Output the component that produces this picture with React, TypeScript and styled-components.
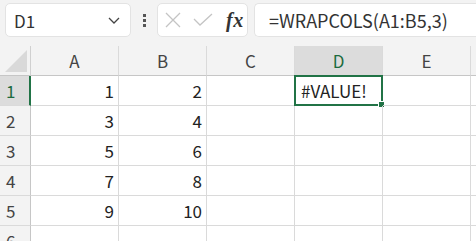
import React from "react";
import styled, { createGlobalStyle } from "styled-components";

const Global = createGlobalStyle`
  html, body { margin: 0; padding: 0; background: #ffffff; overflow: hidden; }
  body { width: 476px; height: 241px; font-family: "Noto Sans CJK JP", "Noto Sans", sans-serif; }
`;

const Page = styled.div`
  width: 476px;
  height: 241px;
  overflow: hidden;
  display: flex;
  flex-direction: column;
`;

const Toolbar = styled.div`
  height: 46px;
  flex: none;
  background: #f3f3f3;
  display: flex;
  align-items: flex-start;
  padding: 3px 0 0 5px;
  box-sizing: border-box;
`;

const Box = styled.div<{ $w: number }>`
  width: ${(p) => p.$w}px;
  flex: none;
  height: 34px;
  box-sizing: border-box;
  background: #ffffff;
  border: 1px solid #e3e3e3;
  border-radius: 5px;
  display: flex;
  align-items: center;
`;

const NameText = styled.span`
  flex: 1;
  padding-left: 8px;
  font-size: 17px;
  color: #333;
`;

const Chevron = styled.svg`
  width: 14px;
  height: 14px;
  margin-right: 9px;
`;

const Dots = styled.div`
  width: 26px;
  flex: none;
  height: 34px;
  display: flex;
  flex-direction: column;
  align-items: center;
  justify-content: center;
  gap: 2px;
  & > i { width: 3px; height: 3px; background: #555; display: block; }
`;

const ActionGroup = styled.div`
  display: flex;
  align-items: center;
  padding-left: 7px;
  gap: 12px;
`;

const Fx = styled.span`
  font-family: "Liberation Serif", serif;
  font-style: italic;
  font-weight: 600;
  font-size: 20px;
  color: #333;
  margin-left: 1px;
  letter-spacing: 0.5px;
`;

const Formula = styled.div`
  flex: none;
  width: 260px;
  margin-left: 6px;
  height: 34px;
  box-sizing: border-box;
  background: #fff;
  border: 1px solid #e3e3e3;
  border-right: none;
  border-radius: 5px 0 0 5px;
  display: flex;
  align-items: center;
  padding-left: 14px;
  font-size: 18px;
  color: #333;
  white-space: nowrap;
`;

const Grid = styled.div`
  display: grid;
  grid-template-columns: 31px repeat(5, 88px) 20px;
  grid-auto-rows: 30px;
`;

const ColHead = styled.div<{ $sel?: boolean }>`
  background: ${(p) => (p.$sel ? "#dcdcdc" : "#f3f3f3")};
  border-right: 1px solid #dadada;
  border-bottom: 1px solid #c6c6c6;
  color: ${(p) => (p.$sel ? "#1d6b3f" : "#444")};
  font-size: 17px;
  display: flex;
  align-items: center;
  justify-content: center;
  box-sizing: border-box;
`;

const Corner = styled.div`
  background: #f3f3f3;
  border-right: 1px solid #d0d0d0;
  border-bottom: 1px solid #c6c6c6;
  display: flex;
  align-items: flex-end;
  justify-content: flex-end;
  padding: 0 3px 3px 0;
  box-sizing: border-box;
`;

const RowHead = styled.div<{ $sel?: boolean }>`
  background: ${(p) => (p.$sel ? "#dcdcdc" : "#f3f3f3")};
  border-right: ${(p) => (p.$sel ? "2px solid #217346" : "1px solid #c6c6c6")};
  border-bottom: 1px solid #dadada;
  color: ${(p) => (p.$sel ? "#1d6b3f" : "#444")};
  font-size: 17px;
  display: flex;
  align-items: center;
  padding-left: 6px;
  box-sizing: border-box;
`;

const Cell = styled.div<{ $align?: "left" | "right" }>`
  border-right: 1px solid #dadada;
  border-bottom: 1px solid #dadada;
  font-size: 17px;
  color: #222;
  display: flex;
  align-items: center;
  justify-content: ${(p) => (p.$align === "left" ? "flex-start" : "flex-end")};
  padding: 0 4px 0 6px;
  box-sizing: border-box;
  position: relative;
`;

const Selection = styled.div`
  position: absolute;
  left: -1px;
  top: -1px;
  right: -1px;
  bottom: -1px;
  border: 2px solid #217346;
  pointer-events: none;
`;

const Handle = styled.div`
  position: absolute;
  right: -4px;
  bottom: -4px;
  width: 5px;
  height: 5px;
  background: #217346;
  border: 1px solid #fff;
`;

const cols = ["A", "B", "C", "D", "E"];
const data: (number | string)[][] = [
  [1, 2],
  [3, 4],
  [5, 6],
  [7, 8],
  [9, 10],
  ["", ""],
];

export default function App() {
  return (
    <Page>
      <Global />
      <Toolbar>
        <Box $w={126}>
          <NameText>D1</NameText>
          <Chevron viewBox="0 0 14 14">
            <path d="M2 5 L7 10 L12 5" fill="none" stroke="#444" strokeWidth="1.3" />
          </Chevron>
        </Box>
        <Dots>
          <i />
          <i />
          <i />
        </Dots>
        <Box $w={91}>
          <ActionGroup>
            <svg width="16" height="16" viewBox="0 0 16 16">
              <path d="M1 1 L15 15 M15 1 L1 15" stroke="#c4c4c4" strokeWidth="1.3" fill="none" />
            </svg>
            <svg width="20" height="14" viewBox="0 0 20 14">
              <path d="M1 6 L7 12 L19 1" stroke="#c4c4c4" strokeWidth="1.3" fill="none" />
            </svg>
            <Fx>fx</Fx>
          </ActionGroup>
        </Box>
        <Formula>=WRAPCOLS(A1:B5,3)</Formula>
      </Toolbar>
      <Grid>
        <Corner>
          <svg width="22" height="22" viewBox="0 0 22 22">
            <path d="M22 0 L22 22 L0 22 Z" fill="#d9d9d9" />
          </svg>
        </Corner>
        {cols.map((c) => (
          <ColHead key={c} $sel={c === "D"}>
            {c}
          </ColHead>
        ))}
        <ColHead />
        {data.map((row, r) => (
          <React.Fragment key={r}>
            <RowHead $sel={r === 0}>{r + 1}</RowHead>
            <Cell>{row[0]}</Cell>
            <Cell>{row[1]}</Cell>
            <Cell />
            {r === 0 ? (
              <Cell $align="left">
                #VALUE!
                <Selection>
                  <Handle />
                </Selection>
              </Cell>
            ) : (
              <Cell />
            )}
            <Cell />
            <Cell />
          </React.Fragment>
        ))}
      </Grid>
    </Page>
  );
}
